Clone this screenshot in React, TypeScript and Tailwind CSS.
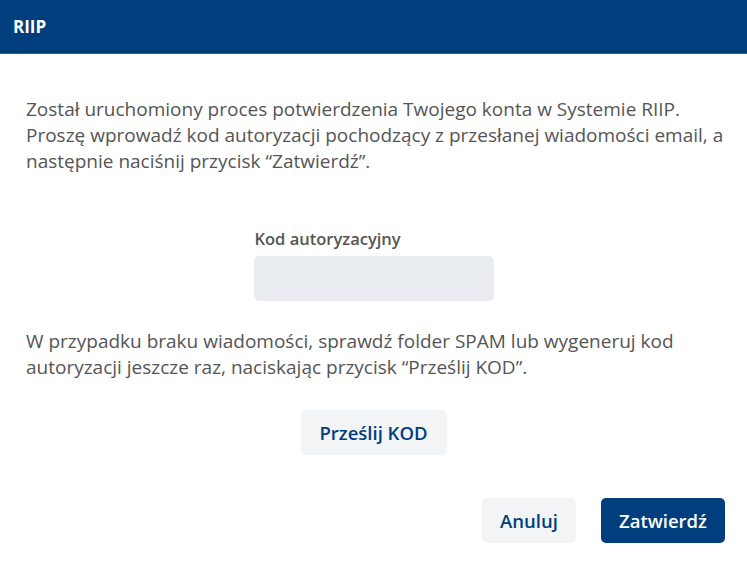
export default function App() {
  return (
    <div className="w-[747px] h-[566px] bg-white font-['Segoe_UI','Open_Sans',sans-serif]">
      <div className="h-[54px] bg-[#003e7e] border-b border-[#2d5c91] flex items-center px-[13px]">
        <h1 className="text-white font-bold text-[17px]">RIIP</h1>
      </div>

      <div className="px-[26px] pt-[42px]">
        <p className="text-[#555] text-[19px] leading-[26px] whitespace-nowrap">
          Został uruchomiony proces potwierdzenia Twojego konta w Systemie RIIP.
          <br />
          Proszę wprowadź kod autoryzacji pochodzący z przesłanej wiadomości email, a
          <br />
          następnie naciśnij przycisk “Zatwierdź”.
        </p>

        <div className="flex flex-col items-center mt-[55px]">
          <div className="w-[240px]">
            <label className="block text-[#555] font-semibold text-[16.5px] leading-[20px] ml-[1px]">
              Kod autoryzacyjny
            </label>
            <input className="mt-[7px] w-[240px] h-[45px] rounded-[5px] bg-[#e9ecf0] outline-none px-3" />
          </div>
        </div>

        <p className="text-[#555] text-[19px] leading-[26px] mt-[27px] whitespace-nowrap">
          W przypadku braku wiadomości, sprawdź folder SPAM lub wygeneruj kod
          <br />
          autoryzacji jeszcze raz, naciskając przycisk “Prześlij KOD”.
        </p>

        <div className="flex justify-center mt-[30px]">
          <button className="h-[45px] w-[146px] rounded-[5px] bg-[#f3f4f6] text-[#003e7e] font-semibold text-[18.5px]">
            Prześlij KOD
          </button>
        </div>
      </div>

      <div className="flex justify-end gap-[25px] px-[22px] mt-[43px]">
        <button className="h-[45px] w-[94px] rounded-[5px] bg-[#f3f4f6] text-[#003e7e] font-semibold text-[18.5px]">
          Anuluj
        </button>
        <button className="h-[45px] w-[124px] rounded-[5px] bg-[#003e7e] text-white font-semibold text-[18.5px]">
          Zatwierdź
        </button>
      </div>
    </div>
  )
}
